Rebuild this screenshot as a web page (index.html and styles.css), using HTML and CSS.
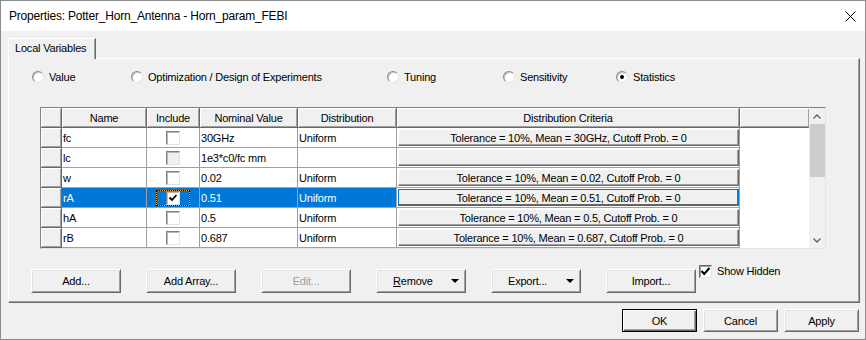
FILE: index.html
```html
<!DOCTYPE html>
<html lang="en">
<head>
    <meta charset="UTF-8">
    <title>Properties: Potter_Horn_Antenna - Horn_param_FEBI</title>
    <link rel="stylesheet" href="styles.css">
</head>
<body>

<div class="window">
    <div class="titlebar">
        <span class="title">Properties: Potter_Horn_Antenna - Horn_param_FEBI</span>
        <svg class="close" width="11" height="11" viewBox="0 0 11 11">
            <path d="M0.5 0.5 L10.5 10.5 M10.5 0.5 L0.5 10.5" stroke="#000" stroke-width="1"/>
        </svg>
    </div>

    <div class="client">
        <div class="tab">Local Variables</div>

        <div class="panel">
            <div class="modes">
                <label class="radio"><span class="dot"></span>Value</label>
                <label class="radio"><span class="dot"></span>Optimization / Design of Experiments</label>
                <label class="radio"><span class="dot"></span>Tuning</label>
                <label class="radio"><span class="dot"></span>Sensitivity</label>
                <label class="radio"><span class="dot on"></span>Statistics</label>
            </div>

            <div class="table">
                <div class="grid">
                    <div class="hd"></div>
                    <div class="hd">Name</div>
                    <div class="hd">Include</div>
                    <div class="hd">Nominal Value</div>
                    <div class="hd">Distribution</div>
                    <div class="hd">Distribution Criteria</div>
                    <div class="hd last"></div>

                    <div class="rh"></div>
                    <div class="cell">fc</div>
                    <div class="cell center"><span class="box"></span></div>
                    <div class="cell">30GHz</div>
                    <div class="cell">Uniform</div>
                    <div class="cell crit"><span class="cbtn">Tolerance = 10%, Mean = 30GHz, Cutoff Prob. = 0</span></div>
                    <div class="blank"></div>

                    <div class="rh"></div>
                    <div class="cell">lc</div>
                    <div class="cell center"><span class="box off"></span></div>
                    <div class="cell">1e3*c0/fc mm</div>
                    <div class="cell"></div>
                    <div class="cell crit"><span class="cbtn"></span></div>
                    <div class="blank"></div>

                    <div class="rh"></div>
                    <div class="cell">w</div>
                    <div class="cell center"><span class="box"></span></div>
                    <div class="cell">0.02</div>
                    <div class="cell">Uniform</div>
                    <div class="cell crit"><span class="cbtn">Tolerance = 10%, Mean = 0.02, Cutoff Prob. = 0</span></div>
                    <div class="blank"></div>

                    <div class="rh"></div>
                    <div class="cell sel">rA</div>
                    <div class="cell sel center">
                        <span class="focus">
                            <span class="box">
                                <svg width="10" height="9" viewBox="0 0 10 9"><polyline points="1.5,4.5 4,7 8.5,2" fill="none" stroke="#000" stroke-width="1.8"/></svg>
                            </span>
                        </span>
                    </div>
                    <div class="cell sel">0.51</div>
                    <div class="cell sel">Uniform</div>
                    <div class="cell crit"><span class="cbtn active">Tolerance = 10%, Mean = 0.51, Cutoff Prob. = 0</span></div>
                    <div class="blank"></div>

                    <div class="rh"></div>
                    <div class="cell">hA</div>
                    <div class="cell center"><span class="box"></span></div>
                    <div class="cell">0.5</div>
                    <div class="cell">Uniform</div>
                    <div class="cell crit"><span class="cbtn">Tolerance = 10%, Mean = 0.5, Cutoff Prob. = 0</span></div>
                    <div class="blank"></div>

                    <div class="rh"></div>
                    <div class="cell">rB</div>
                    <div class="cell center"><span class="box"></span></div>
                    <div class="cell">0.687</div>
                    <div class="cell">Uniform</div>
                    <div class="cell crit"><span class="cbtn">Tolerance = 10%, Mean = 0.687, Cutoff Prob. = 0</span></div>
                    <div class="blank"></div>
                </div>

                <div class="scroll">
                    <svg class="arrow" width="8" height="5" viewBox="0 0 8 5"><polyline points="0.5,4.5 4,1 7.5,4.5" fill="none" stroke="#606060" stroke-width="1.3"/></svg>
                    <div class="thumb"></div>
                    <div class="track"></div>
                    <svg class="arrow" width="8" height="5" viewBox="0 0 8 5"><polyline points="0.5,0.5 4,4 7.5,0.5" fill="none" stroke="#606060" stroke-width="1.3"/></svg>
                </div>
            </div>

            <div class="actions">
                <div class="buttons">
                    <button class="btn">Add...</button>
                    <button class="btn">Add Array...</button>
                    <button class="btn disabled">Edit...</button>
                    <button class="btn drop"><span><u>R</u>emove</span><i class="tri"></i></button>
                    <button class="btn drop"><span>Export...</span><i class="tri"></i></button>
                    <button class="btn">Import...</button>
                </div>
                <label class="show">
                    <span class="check">
                        <svg width="11" height="11" viewBox="0 0 11 11"><polyline points="1.5,5 4.2,8 9.5,2" fill="none" stroke="#000" stroke-width="2"/></svg>
                    </span>
                    Show Hidden
                </label>
            </div>
        </div>

        <div class="footer">
            <button class="btn small default">OK</button>
            <button class="btn small">Cancel</button>
            <button class="btn small">Apply</button>
        </div>
    </div>
</div>

</body>
</html>
```

FILE: styles.css
```css
* {
    box-sizing: border-box;
}
body {
    margin: 0;
    font-family: "Liberation Sans", Arial, sans-serif;
    font-size: 11px;
    letter-spacing: -0.2px;
    color: #000;
}
.window {
    width: 866px;
    height: 340px;
    border: 1px solid #8c8c8c;
    background: #f0f0f0;
    display: flex;
    flex-direction: column;
}
.titlebar {
    height: 30px;
    background: #fff;
    display: flex;
    align-items: center;
    justify-content: space-between;
    padding: 0 9px 0 8px;
    font-size: 12px;
}
.close {
    display: block;
    margin-top: 1px;
}
.client {
    flex: 1;
    padding: 7px 0 0 7px;
    display: flex;
    flex-direction: column;
}

/* tab strip */
.tab {
    align-self: flex-start;
    width: 88px;
    height: 21px;
    padding: 3px 0 0 6px;
    line-height: 13px;
    background: #f0f0f0;
    border: 1px solid;
    border-color: #fff #696969 transparent #fff;
    border-bottom: none;
    box-shadow: inset -1px 0 #a0a0a0;
    margin-bottom: -1px;
    position: relative;
    z-index: 1;
}
.panel {
    width: 852px;
    height: 245px;
    border: 1px solid;
    border-color: #fff #696969 #696969 #fff;
    box-shadow: inset -1px -1px #a0a0a0;
}

/* radio row */
.modes {
    display: grid;
    grid-template-columns: 99px 256px 116px 113px auto;
    height: 12px;
    margin: 12px 0 0 23px;
}
.radio {
    display: flex;
    align-items: center;
    gap: 5px;
    line-height: 12px;
    white-space: nowrap;
}
.dot {
    width: 12px;
    height: 12px;
    border-radius: 50%;
    border: 1px solid;
    border-color: #8a8a8a #e3e3e3 #e3e3e3 #8a8a8a;
    background: #fff;
    box-shadow: inset 1px 1px #c4c4c4;
    display: flex;
    align-items: center;
    justify-content: center;
}
.dot.on::after {
    content: "";
    width: 4px;
    height: 4px;
    border-radius: 50%;
    background: #000;
}

/* variables table */
.table {
    display: flex;
    width: 786px;
    margin: 24px 0 0 31px;
    border: 1px solid;
    border-color: #828282 #e3e3e3 #e3e3e3 #828282;
}
.grid {
    display: grid;
    grid-template-columns: 21px 85px 53px 98px 99px 343px 69px;
    grid-auto-rows: 20px;
    background: #fff;
}
.hd, .rh {
    background: #f0f0f0;
    border-right: 1px solid #696969;
    border-bottom: 1px solid #696969;
    box-shadow: inset 1px 1px #fff, inset -1px -1px #a0a0a0;
    display: flex;
    align-items: center;
    justify-content: center;
    white-space: nowrap;
}
.hd.last {
    border-right: none;
}
.cell {
    border-right: 1px solid #a0a0a0;
    border-bottom: 1px solid #a0a0a0;
    padding-left: 1px;
    display: flex;
    align-items: center;
    white-space: nowrap;
}
.cell.center {
    justify-content: center;
    padding-left: 0;
}
.cell.sel {
    background: #0078d7;
    color: #fff;
}
.cell.crit {
    padding: 1px 0 1px 1px;
}
.cbtn {
    width: 100%;
    height: 100%;
    background: #f0f0f0;
    border: 1px solid;
    border-color: #fff #696969 #696969 #fff;
    box-shadow: inset -1px -1px #a0a0a0;
    display: flex;
    align-items: center;
    justify-content: center;
    color: #000;
}
.cbtn.active {
    border-color: #0078d7;
    box-shadow: inset -1px -1px #696969;
}
.box {
    width: 14px;
    height: 14px;
    background: #fff;
    border: 1px solid;
    border-color: #828282 #e3e3e3 #e3e3e3 #828282;
    box-shadow: inset 1px 1px #b8b8b8;
    display: flex;
    align-items: center;
    justify-content: center;
}
.box.off {
    background: #f0f0f0;
}
/* dotted focus rect: orange shows through the gaps of the black dots */
.focus {
    width: 34px;
    height: 16px;
    border: 1px dotted #000;
    background: #f59a23;
    box-shadow: inset 0 0 0 20px #0078d7;
    display: flex;
    align-items: center;
    justify-content: center;
}
.blank {
    background: #fff;
}
.scroll {
    width: 16px;
    background: #f0f0f0;
    display: flex;
    flex-direction: column;
    align-items: center;
    padding: 6px 0 5px;
}
.arrow {
    display: block;
}
.thumb {
    width: 15px;
    height: 53px;
    margin-top: 5px;
    background: #cdcdcd;
}
.track {
    flex: 1;
}

/* buttons */
.btn {
    font: inherit;
    letter-spacing: inherit;
    color: #000;
    width: 90px;
    height: 24px;
    padding: 0;
    background: #f0f0f0;
    border: 1px solid;
    border-color: #fff #696969 #696969 #fff;
    box-shadow: inset 1px 1px #e3e3e3, inset -1px -1px #a0a0a0;
    display: flex;
    align-items: center;
    justify-content: center;
}
.btn.disabled {
    color: #a0a0a0;
}
.btn.drop {
    justify-content: space-between;
    padding: 0 6px 0 16px;
}
.btn u {
    text-decoration: underline;
}
.tri {
    width: 0;
    height: 0;
    border-left: 4px solid transparent;
    border-right: 4px solid transparent;
    border-top: 4px solid #000;
}
.actions {
    display: flex;
    align-items: flex-start;
    margin: 16px 0 0 22px;
}
.buttons {
    display: flex;
    gap: 25px;
    margin-top: 4px;
}
.show {
    display: flex;
    align-items: center;
    gap: 5px;
    margin-left: 3px;
    line-height: 13px;
}
.check {
    width: 13px;
    height: 13px;
    background: #fff;
    border: 1px solid;
    border-color: #696969 #e3e3e3 #e3e3e3 #696969;
    box-shadow: inset 1px 1px #a0a0a0;
    display: flex;
    align-items: center;
    justify-content: center;
}
.footer {
    display: flex;
    justify-content: flex-end;
    gap: 6px;
    margin: 6px 6px 0 0;
}
.btn.small {
    width: 75px;
    height: 23px;
}
.btn.default {
    border-color: #000;
    box-shadow: inset 1px 1px #fff, inset -1px -1px #696969, inset -2px -2px #a0a0a0;
}
```
